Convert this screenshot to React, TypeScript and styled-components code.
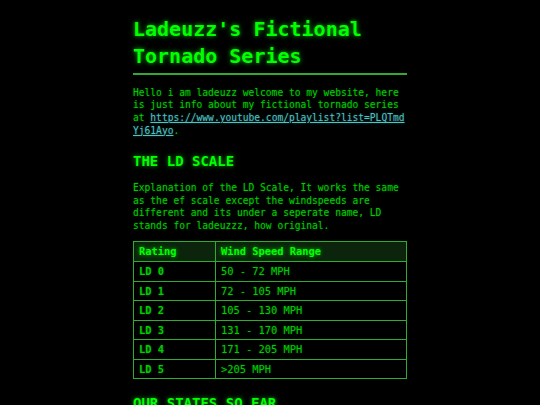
import React from "react";
import styled, { createGlobalStyle } from "styled-components";

const Global = createGlobalStyle`
  html, body {
    margin: 0;
    padding: 0;
    background: #000;
  }
  body {
    font-family: "DejaVu Sans Mono", "Liberation Mono", monospace;
    color: #00c800;
  }
`;

const Page = styled.main`
  max-width: 274px;
  margin: 0 auto;
  padding: 16px 0 24px;
`;

const Title = styled.h1`
  margin: 0;
  padding-bottom: 2px;
  border-bottom: 2px solid #33a833;
  font-size: 20px;
  line-height: 27.4px;
  font-weight: bold;
  color: #00ff00;
  text-shadow: 0 0 5px rgba(0, 255, 0, 0.75);
`;

const Heading = styled.h2`
  margin: 16px 0 12px;
  font-size: 14px;
  line-height: 17px;
  font-weight: bold;
  color: #00ff00;
  text-shadow: 0 0 5px rgba(0, 255, 0, 0.7);
`;

const Para = styled.p`
  margin: 12px 0 8px;
  font-size: 9.6px;
  line-height: 12.6px;
  color: #00cc00;
  text-shadow: 0 0 2px rgba(0, 204, 0, 0.45);
`;

const Link = styled.a`
  color: #4cc4c4;
  text-decoration: underline;
  word-break: break-all;
  text-shadow: 0 0 2px rgba(76, 196, 196, 0.4);
`;

const Table = styled.table`
  width: 100%;
  border-collapse: collapse;
  border: 1px solid #30ac30;
  font-size: 10.4px;
  line-height: 10.5px;
`;

const Th = styled.th<{ $w?: string }>`
  text-align: left;
  padding: 4.5px 5px;
  border: 1px solid #30ac30;
  background: #0b240b;
  color: #00ff00;
  font-weight: bold;
  text-shadow: 0 0 4px rgba(0, 255, 0, 0.7);
  width: ${(p) => p.$w ?? "auto"};
`;

const Td = styled.td<{ $strong?: boolean }>`
  padding: 4px 5px;
  border: 1px solid #30ac30;
  color: #00cc00;
  font-weight: ${(p) => (p.$strong ? "bold" : "normal")};
  text-shadow: 0 0 2px rgba(0, 204, 0, 0.45);
`;

const rows = [
  ["LD 0", "50 - 72 MPH"],
  ["LD 1", "72 - 105 MPH"],
  ["LD 2", "105 - 130 MPH"],
  ["LD 3", "131 - 170 MPH"],
  ["LD 4", "171 - 205 MPH"],
  ["LD 5", ">205 MPH"],
];

export default function App() {
  return (
    <>
      <Global />
      <Page>
        <Title>Ladeuzz's Fictional Tornado Series</Title>
        <Para>
          Hello i am ladeuzz welcome to my website, here is just info about my
          fictional tornado series at{" "}
          <Link href="#">https://www.youtube.com/playlist?list=PLQTmdYj61Ayo</Link>.
        </Para>
        <Heading>THE LD SCALE</Heading>
        <Para>
          Explanation of the LD Scale, It works the same as the ef scale except
          the windspeeds are different and its under a seperate name, LD stands
          for ladeuzzz, how original.
        </Para>
        <Table>
          <thead>
            <tr>
              <Th $w="30%">Rating</Th>
              <Th>Wind Speed Range</Th>
            </tr>
          </thead>
          <tbody>
            {rows.map(([r, s]) => (
              <tr key={r}>
                <Td $strong>{r}</Td>
                <Td>{s}</Td>
              </tr>
            ))}
          </tbody>
        </Table>
        <Heading>OUR STATES SO FAR</Heading>
      </Page>
    </>
  );
}
